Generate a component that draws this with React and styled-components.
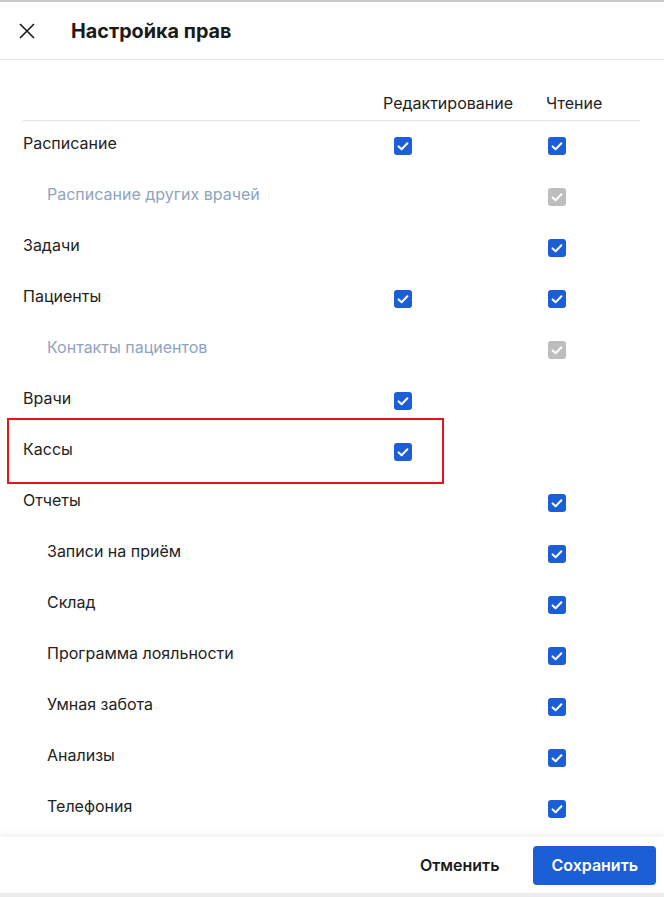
import React from "react";
import styled, { createGlobalStyle } from "styled-components";

const Global = createGlobalStyle`
  html, body { margin: 0; padding: 0; background: #fff; }
  body { font-family: Inter, "Noto Sans", sans-serif; color: #1f1f1f; }
  * { box-sizing: border-box; }
`;

const Page = styled.div`
  width: 664px;
  height: 897px;
  display: flex;
  flex-direction: column;
  border-top: 2px solid #c9c9cd;
  overflow: hidden;
`;

const Header = styled.header`
  height: 58px;
  flex: none;
  display: flex;
  align-items: center;
  gap: 36px;
  padding: 1px 0 0 19px;
  border-bottom: 1px solid #e2e2e2;
`;

const CloseBtn = styled.button`
  border: none;
  background: none;
  padding: 0;
  width: 16px;
  height: 16px;
  display: flex;
  cursor: pointer;
`;

const Title = styled.h1`
  margin: 0;
  font-size: 19.8px;
  font-weight: 700;
  color: #1a1a1a;
`;

const Content = styled.main`
  flex: 1;
  overflow: hidden;
  padding: 0 24px 0 23px;
`;

const Grid = styled.div`
  display: grid;
  grid-template-columns: 360px 163px 94px;
`;

const HeadCell = styled.div`
  padding: 33px 0 7px;
  font-size: 16px;
  line-height: 20px;
  color: #222;
  border-bottom: 1px solid #e2e2e2;
  white-space: nowrap;
`;

const Row = styled.div`
  display: contents;
`;

const LabelCell = styled.div`
  position: relative;
  height: 51px;
  padding: 12px 0 0 ${(p) => (p.$indent ? 24 : 0)}px;
  font-size: 16px;
  line-height: 20px;
  color: ${(p) => (p.$muted ? "#8ea3bf" : "#222")};
`;

const BoxCell = styled.div`
  height: 51px;
  padding: 16px 0 0 ${(p) => p.$offset}px;
`;

const Highlight = styled.div`
  position: absolute;
  left: -16px;
  top: -9px;
  width: 437px;
  height: 66px;
  border: 2px solid #e3161d;
  pointer-events: none;
`;

const Box = styled.span`
  display: block;
  width: 18px;
  height: 18px;
  border-radius: 3px;
  background: ${(p) => (p.$disabled ? "#bdbdbd" : "#1b5ed6")};
`;

const Footer = styled.footer`
  flex: none;
  height: 56px;
  display: flex;
  align-items: center;
  justify-content: flex-end;
  gap: 18px;
  padding-right: 8px;
  background: #fff;
  box-shadow: 0 -3px 6px rgba(0, 0, 0, 0.06);
  position: relative;
`;

const BottomStrip = styled.div`
  flex: none;
  height: 4px;
  background: #ececec;
`;

const Button = styled.button`
  height: 39px;
  padding: 0 ${(p) => (p.$primary ? 18 : 16)}px;
  border: none;
  border-radius: 4px;
  font-family: Inter, "Noto Sans", sans-serif;
  font-size: 16px;
  font-weight: 600;
  background: ${(p) => (p.$primary ? "#1b5ed6" : "transparent")};
  color: ${(p) => (p.$primary ? "#fff" : "#1a1a1a")};
  cursor: pointer;
`;

const Check = ({ disabled }) => (
  <Box $disabled={disabled}>
    <svg width="18" height="18" viewBox="0 0 18 18">
      <path
        d="M4.6 9.4 L7.6 12.2 L13.4 6.2"
        fill="none"
        stroke="#fff"
        strokeWidth="2"
        strokeLinecap="round"
        strokeLinejoin="round"
      />
    </svg>
  </Box>
);

const rows = [
  { label: "Расписание", edit: true, read: true },
  { label: "Расписание других врачей", indent: true, muted: true, read: "disabled" },
  { label: "Задачи", read: true },
  { label: "Пациенты", edit: true, read: true },
  { label: "Контакты пациентов", indent: true, muted: true, read: "disabled" },
  { label: "Врачи", edit: true },
  { label: "Кассы", edit: true, highlight: true },
  { label: "Отчеты", read: true },
  { label: "Записи на приём", indent: true, read: true },
  { label: "Склад", indent: true, read: true },
  { label: "Программа лояльности", indent: true, read: true },
  { label: "Умная забота", indent: true, read: true },
  { label: "Анализы", indent: true, read: true },
  { label: "Телефония", indent: true, read: true },
];

export default function App() {
  return (
    <>
      <Global />
      <Page>
        <Header>
          <CloseBtn aria-label="Закрыть">
            <svg width="16" height="16" viewBox="0 0 16 16">
              <path d="M1 1 L15 15 M15 1 L1 15" stroke="#1a1a1a" strokeWidth="1.6" fill="none" />
            </svg>
          </CloseBtn>
          <Title>Настройка прав</Title>
        </Header>
        <Content>
          <Grid>
            <HeadCell />
            <HeadCell>Редактирование</HeadCell>
            <HeadCell>Чтение</HeadCell>
            {rows.map((r) => (
              <Row key={r.label}>
                <LabelCell $indent={r.indent} $muted={r.muted}>
                  {r.label}
                  {r.highlight && <Highlight />}
                </LabelCell>
                <BoxCell $offset={11}>{r.edit && <Check />}</BoxCell>
                <BoxCell $offset={2}>
                  {r.read && <Check disabled={r.read === "disabled"} />}
                </BoxCell>
              </Row>
            ))}
          </Grid>
        </Content>
        <Footer>
          <Button>Отменить</Button>
          <Button $primary>Сохранить</Button>
        </Footer>
        <BottomStrip />
      </Page>
    </>
  );
}
